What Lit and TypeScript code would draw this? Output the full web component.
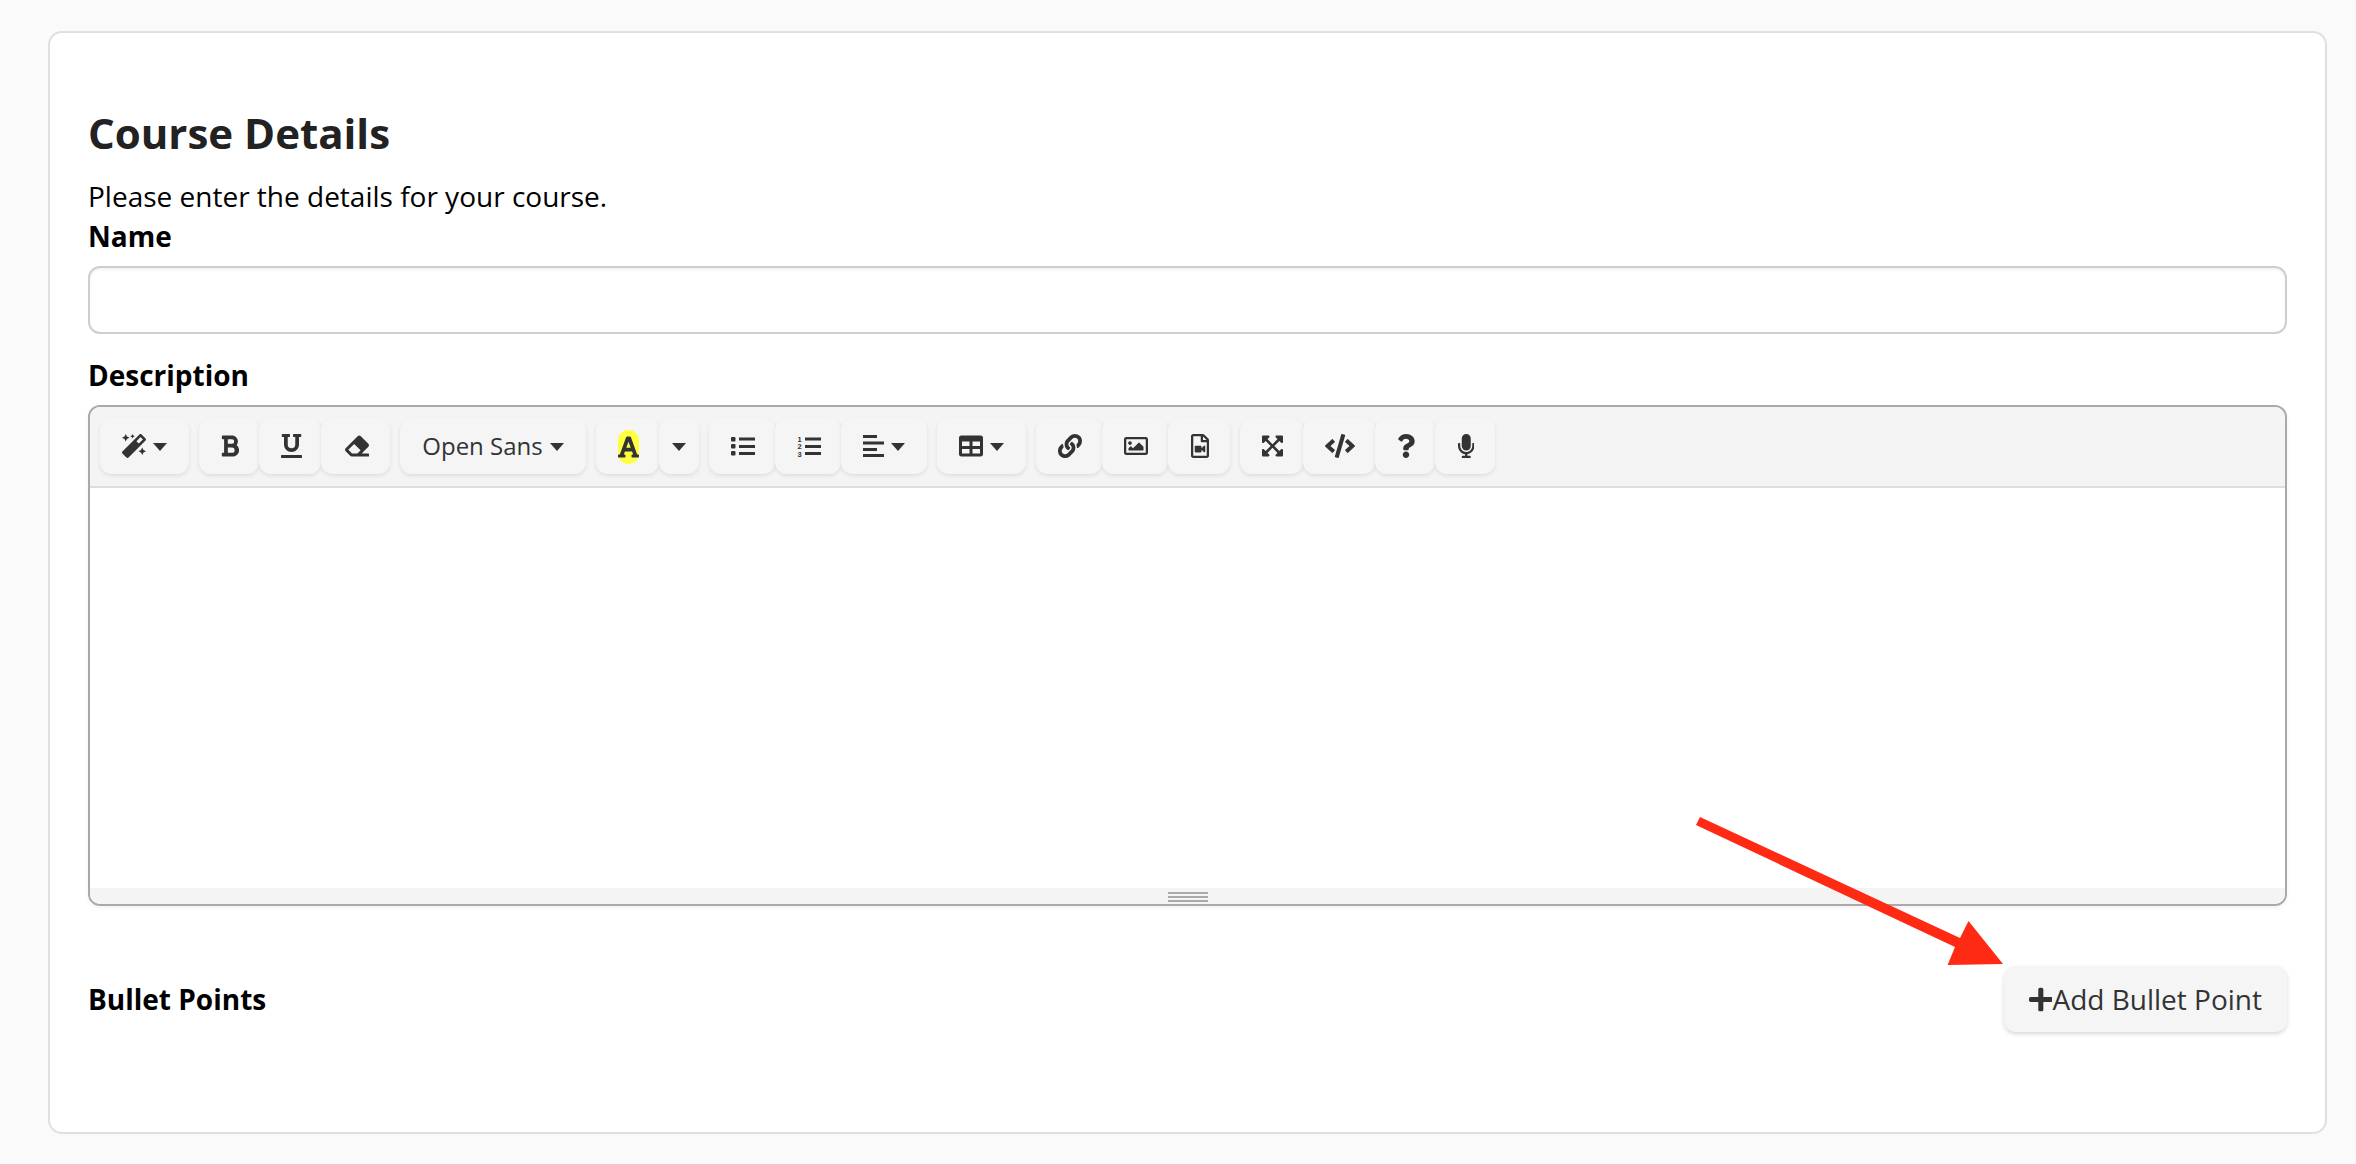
import { LitElement, html, css, svg } from "lit";
import { customElement } from "lit/decorators.js";

const fa = (w: number, d: string, h = 24) =>
  html`<svg class="ic" width=${(w / 512) * h} height=${h} viewBox="0 0 ${w} 512"><path d=${d} fill="currentColor"></path></svg>`;

const caret = html`<svg class="ct" width="14" height="8" viewBox="0 0 14 8"><polygon points="0,0 14,0 7,8" fill="currentColor"></polygon></svg>`;

const P = {
  magic: "M224 96l16-32 32-16-32-16-16-32-16 32-32 16 32 16 16 32zM80 160l26.66-53.33L160 80l-53.34-26.67L80 0 53.34 53.33 0 80l53.34 26.67L80 160zm352 128l-26.66 53.33L352 368l53.34 26.67L432 448l26.66-53.33L512 368l-53.34-26.67L432 288zm70.62-193.77L417.77 9.38C411.53 3.12 403.34 0 395.15 0c-8.19 0-16.38 3.12-22.63 9.38L9.38 372.52c-12.5 12.5-12.5 32.76 0 45.25l84.85 84.85c6.25 6.25 14.44 9.37 22.62 9.37 8.19 0 16.38-3.12 22.63-9.37l363.14-363.15c12.5-12.48 12.5-32.75 0-45.24zM359.45 203.46l-50.91-50.91 86.6-86.6 50.91 50.91-86.6 86.6z",
  bold: "M333.49 238a122 122 0 0 0 27-65.21C367.87 96.49 308 32 233.42 32H34a16 16 0 0 0-16 16v48a16 16 0 0 0 16 16h31.87v288H34a16 16 0 0 0-16 16v48a16 16 0 0 0 16 16h209.32c70.8 0 134.14-51.75 141-122.4 4.74-48.45-16.39-92.06-50.83-119.6zM145.66 112h87.76a48 48 0 0 1 0 96h-87.76zm87.76 288h-87.76V288h87.76a56 56 0 0 1 0 112z",
  underline: "M32 64h32v160c0 88.22 71.78 160 160 160s160-71.78 160-160V64h32a16 16 0 0 0 16-16V16a16 16 0 0 0-16-16H272a16 16 0 0 0-16 16v32a16 16 0 0 0 16 16h32v160a80 80 0 0 1-160 0V64h32a16 16 0 0 0 16-16V16a16 16 0 0 0-16-16H32a16 16 0 0 0-16 16v32a16 16 0 0 0 16 16zm400 384H16a16 16 0 0 0-16 16v32a16 16 0 0 0 16 16h416a16 16 0 0 0 16-16v-32a16 16 0 0 0-16-16z",
  eraser: "M497.941 273.941c18.745-18.745 18.745-49.137 0-67.882l-160-160c-18.745-18.745-49.136-18.746-67.883 0l-256 256c-18.745 18.745-18.745 49.137 0 67.882l96 96A48.004 48.004 0 0 0 144 480h356c6.627 0 12-5.373 12-12v-40c0-6.627-5.373-12-12-12H355.883l142.058-142.059zm-302.627-62.627l137.373 137.373L265.373 416H150.628l-80-80 124.686-124.686z",
  font: "M432 416h-23.41L277.88 53.69A32 32 0 0 0 247.58 32h-47.16a32 32 0 0 0-30.3 21.69L39.41 416H16a16 16 0 0 0-16 16v32a16 16 0 0 0 16 16h128a16 16 0 0 0 16-16v-32a16 16 0 0 0-16-16h-19.58l23.3-64h152.56l23.3 64H304a16 16 0 0 0-16 16v32a16 16 0 0 0 16 16h128a16 16 0 0 0 16-16v-32a16 16 0 0 0-16-16zM176.85 272L224 142.51 271.15 272z",
  table: "M464 32H48C21.49 32 0 53.49 0 80v352c0 26.51 21.49 48 48 48h416c26.51 0 48-21.49 48-48V80c0-26.51-21.49-48-48-48zM224 416H64v-96h160v96zm0-160H64v-96h160v96zm224 160H288v-96h160v96zm0-160H288v-96h160v96z",
  link: "M326.612 185.391c59.747 59.809 58.927 155.698.36 214.59-.11.12-.24.25-.36.37l-67.2 67.2c-59.27 59.27-155.699 59.262-214.96 0-59.27-59.26-59.27-155.7 0-214.96l37.106-37.106c9.84-9.84 26.786-3.3 27.294 10.606.648 17.722 3.826 35.527 9.69 52.721 1.986 5.822.567 12.262-3.783 16.612l-13.087 13.087c-28.026 28.026-28.905 73.66-1.155 101.96 28.024 28.579 74.086 28.749 102.325.51l67.2-67.19c28.191-28.191 28.073-73.757 0-101.83-3.701-3.694-7.429-6.564-10.341-8.569a16.037 16.037 0 0 1-6.947-12.606c-.396-10.567 3.348-21.456 11.698-29.806l21.054-21.055c5.521-5.521 14.182-6.199 20.584-1.731a152.482 152.482 0 0 1 20.522 17.197zM467.547 44.449c-59.261-59.262-155.69-59.27-214.96 0l-67.2 67.2c-.12.12-.25.25-.36.37-58.566 58.892-59.387 154.781.36 214.59a152.454 152.454 0 0 0 20.521 17.196c6.402 4.468 15.064 3.789 20.584-1.731l21.054-21.055c8.35-8.35 12.094-19.239 11.698-29.806a16.037 16.037 0 0 0-6.947-12.606c-2.912-2.005-6.64-4.875-10.341-8.569-28.073-28.073-28.191-73.639 0-101.83l67.2-67.19c28.239-28.239 74.3-28.069 102.325.51 27.75 28.3 26.872 73.934-1.155 101.96l-13.087 13.087c-4.35 4.35-5.769 10.79-3.783 16.612 5.864 17.194 9.042 34.999 9.69 52.721.509 13.906 17.454 20.446 27.294 10.606l37.106-37.106c59.271-59.259 59.271-155.699.001-214.959z",
  image: "M464 64H48C21.49 64 0 85.49 0 112v288c0 26.51 21.49 48 48 48h416c26.51 0 48-21.49 48-48V112c0-26.51-21.49-48-48-48zm-6 336H54a6 6 0 0 1-6-6V118a6 6 0 0 1 6-6h404a6 6 0 0 1 6 6v276a6 6 0 0 1-6 6zM128 152c-22.091 0-40 17.909-40 40s17.909 40 40 40 40-17.909 40-40-17.909-40-40-40zM96 352h320v-80l-87.515-87.515c-4.686-4.686-12.284-4.686-16.971 0L192 304l-39.515-39.515c-4.686-4.686-12.284-4.686-16.971 0L96 304v48z",
  video: "M369.941 97.941l-83.882-83.882A48 48 0 0 0 252.118 0H48C21.49 0 0 21.49 0 48v416c0 26.51 21.49 48 48 48h288c26.51 0 48-21.49 48-48V131.882a48 48 0 0 0-14.059-33.941zM332.118 128H256V51.882L332.118 128zM48 464V48h160v104c0 13.255 10.745 24 24 24h104v288H48zm228.687-211.303L224 305.374V268c0-11.046-8.954-20-20-20H100c-11.046 0-20 8.954-20 20v104c0 11.046 8.954 20 20 20h104c11.046 0 20-8.954 20-20v-37.374l52.687 52.674C286.704 397.318 304 390.28 304 375.986V264.011c0-14.311-17.309-21.319-27.313-11.314z",
  expand: "M448 344v112a23.94 23.94 0 0 1-24 24H312c-21.39 0-32.09-25.9-17-41l36.2-36.2L224 295.6 116.77 402.9 153 439c15.09 15.1 4.39 41-17 41H24a23.94 23.94 0 0 1-24-24V344c0-21.4 25.89-32.1 41-17l36.19 36.2L184.46 256 77.18 148.7 41 185c-15.1 15.1-41 4.4-41-17V56a23.94 23.94 0 0 1 24-24h112c21.39 0 32.09 25.9 17 41l-36.2 36.2L224 216.4l107.23-107.3L295 73c-15.09-15.1-4.39-41 17-41h112a23.94 23.94 0 0 1 24 24v112c0 21.4-25.89 32.1-41 17l-36.19-36.2L263.54 256l107.28 107.3L407 327.1c15.1-15.2 41-4.5 41 16.9z",
  code: "M278.9 511.5l-61-17.7c-6.4-1.8-10-8.5-8.2-14.9L346.2 8.7c1.8-6.4 8.5-10 14.9-8.2l61 17.7c6.4 1.8 10 8.5 8.2 14.9L293.8 503.3c-1.9 6.4-8.5 10.1-14.9 8.2zm-114-112.2l43.5-46.4c4.6-4.9 4.3-12.7-.8-17.2L117 256l90.6-79.7c5.1-4.5 5.5-12.3.8-17.2l-43.5-46.4c-4.5-4.8-12.1-5.1-17-.5L3.8 247.2c-5.1 4.7-5.1 12.8 0 17.5l144.1 135.1c4.9 4.6 12.5 4.4 17-.5zm327.2.6l144.1-135.1c5.1-4.7 5.1-12.8 0-17.5L492.1 112.1c-4.8-4.5-12.4-4.3-17 .5L431.6 159c-4.6 4.9-4.3 12.7.8 17.2L523 256l-90.6 79.7c-5.1 4.5-5.5 12.3-.8 17.2l43.5 46.4c4.5 4.9 12.1 5.1 17 .6z",
  help: "M202.021 0C122.202 0 70.503 32.703 29.914 91.026c-7.363 10.58-5.093 25.086 5.178 32.874l43.138 32.709c10.373 7.865 25.132 6.026 33.253-4.148 25.049-31.381 43.63-49.449 82.757-49.449 30.764 0 68.816 19.799 68.816 49.631 0 22.552-18.617 34.134-48.993 51.164-35.423 19.86-82.299 44.576-82.299 106.405V320c0 13.255 10.745 24 24 24h72.471c13.255 0 24-10.745 24-24v-5.773c0-42.86 125.268-44.645 125.268-160.627C377.504 66.256 286.902 0 202.021 0zM192 373.459c-38.196 0-69.271 31.075-69.271 69.271 0 38.195 31.075 69.27 69.271 69.27s69.271-31.075 69.271-69.271-31.075-69.27-69.271-69.27z",
  mic: "M176 352c53.02 0 96-42.98 96-96V96c0-53.02-42.98-96-96-96S80 42.98 80 96v160c0 53.02 42.98 96 96 96zm160-160h-16c-8.84 0-16 7.16-16 16v48c0 74.8-64.49 134.82-140.79 127.38C96.71 376.89 48 317.11 48 250.3V208c0-8.84-7.16-16-16-16H16c-8.84 0-16 7.16-16 16v40.16c0 89.64 63.97 169.55 152 181.69V464H96c-8.84 0-16 7.16-16 16v16c0 8.84 7.16 16 16 16h160c8.84 0 16-7.16 16-16v-16c0-8.84-7.16-16-16-16h-56v-33.77C285.71 418.47 352 344.9 352 256v-48c0-8.84-7.16-16-16-16z",
  plus: "M416 208H272V64c0-17.67-14.33-32-32-32h-32c-17.67 0-32 14.33-32 32v144H32c-17.67 0-32 14.33-32 32v32c0 17.67 14.33 32 32 32h144v144c0 17.67 14.33 32 32 32h32c17.67 0 32-14.33 32-32V304h144c17.67 0 32-14.33 32-32v-32c0-17.67-14.33-32-32-32z",
};

const ulIcon = html`<svg class="ic" width="24" height="22" viewBox="0 0 24 22" fill="currentColor">
  <rect x="0" y="2" width="4.5" height="4.5" rx="1"></rect><rect x="0" y="9" width="4.5" height="4.5" rx="1"></rect><rect x="0" y="16" width="4.5" height="4.5" rx="1"></rect>
  <rect x="8" y="2.5" width="16" height="3"></rect><rect x="8" y="10" width="16" height="3"></rect><rect x="8" y="17" width="16" height="3"></rect></svg>`;

const olIcon = html`<svg class="ic" width="24" height="26" viewBox="0 -2 24 26" fill="currentColor">
  <text class="num" x="2.5" y="6.5" text-anchor="middle">1</text><text class="num" x="2.5" y="14" text-anchor="middle">2</text><text class="num" x="2.5" y="21.5" text-anchor="middle">3</text>
  <rect x="8" y="2.5" width="16" height="3"></rect><rect x="8" y="10" width="16" height="3"></rect><rect x="8" y="17" width="16" height="3"></rect></svg>`;

const alignIcon = html`<svg class="ic" width="21" height="22" viewBox="0 0 21 22" fill="currentColor">
  <rect y="0" width="14" height="3"></rect><rect y="6.5" width="21" height="3"></rect><rect y="13" width="14" height="3"></rect><rect y="19" width="21" height="3"></rect></svg>`;

type Btn = { w: number; c: unknown };

const groups: Btn[][] = [
  [{ w: 89, c: html`${fa(512, P.magic)}${caret}` }],
  [
    { w: 60, c: fa(384, P.bold) },
    { w: 62, c: fa(448, P.underline) },
    { w: 69, c: fa(512, P.eraser) },
  ],
  [{ w: 186, c: html`<span class="fname">Open Sans</span>${caret}` }],
  [
    { w: 63, c: html`<span class="hl">${fa(448, P.font)}</span>` },
    { w: 40, c: caret },
  ],
  [
    { w: 66, c: ulIcon },
    { w: 66, c: olIcon },
    { w: 86, c: html`${alignIcon}${caret}` },
  ],
  [{ w: 89, c: html`${fa(512, P.table)}${caret}` }],
  [
    { w: 66, c: fa(512, P.link) },
    { w: 66, c: fa(512, P.image) },
    { w: 62, c: fa(384, P.video) },
  ],
  [
    { w: 63, c: fa(448, P.expand) },
    { w: 72, c: fa(640, P.code) },
    { w: 60, c: fa(384, P.help) },
    { w: 60, c: fa(352, P.mic) },
  ],
];

@customElement("app-root")
export class AppRoot extends LitElement {
  static styles = css`
    :host {
      display: block;
      position: relative;
      box-sizing: border-box;
      height: 1164px;
      padding: 31px 29px 30px 48px;
      background: #fafafa;
      font-family: "Open Sans", sans-serif;
      font-size: 28px;
      line-height: 36px;
      color: #000;
    }
    .card {
      box-sizing: border-box;
      height: 1103px;
      background: #fff;
      border: 2px solid #e0e0e0;
      border-radius: 14px;
      padding: 75px 38px 0;
    }
    h3 {
      margin: 0 0 20px;
      font-size: 42px;
      line-height: 50px;
      font-weight: 700;
      color: #222;
    }
    p {
      margin: 0 0 4px;
    }
    label {
      display: block;
      font-weight: 700;
      margin-bottom: 12px;
    }
    .input {
      box-sizing: border-box;
      height: 68px;
      border: 2px solid #cecece;
      border-radius: 12px;
      box-shadow: inset 0 2px 3px rgba(0, 0, 0, 0.05);
      margin-bottom: 23px;
    }
    .editor {
      box-sizing: border-box;
      height: 501px;
      border: 2px solid #a9a9a9;
      border-radius: 12px;
      box-shadow: 0 2px 4px rgba(0, 0, 0, 0.05);
      overflow: hidden;
    }
    .toolbar {
      display: flex;
      gap: 10px;
      box-sizing: border-box;
      height: 81px;
      padding: 11px 10px;
      background: #f4f4f4;
      border-bottom: 2px solid #ddd;
    }
    .group {
      display: flex;
    }
    .btn {
      display: flex;
      align-items: center;
      justify-content: center;
      gap: 7px;
      height: 56px;
      background: #f5f5f5;
      border-radius: 12px;
      box-shadow: 0 2px 4px rgba(0, 0, 0, 0.09);
      color: #333;
      font-size: 24px;
    }
    .ic,
    .ct {
      display: block;
      flex: none;
    }
    .ct {
      margin-top: 2px;
    }
    .btn > .ic:only-child,
    .btn > .hl {
      margin-left: 2px;
    }
    .num {
      font: 700 7.5px "Liberation Sans", sans-serif;
    }
    .hl {
      display: flex;
      align-items: center;
      justify-content: center;
      width: 21px;
      height: 34px;
      margin-top: 2px;
      background: #ffff3f;
      border-radius: 10px;
    }
    .area {
      height: 400px;
      background: #fff;
    }
    .status {
      display: flex;
      flex-direction: column;
      align-items: center;
      gap: 2px;
      box-sizing: border-box;
      height: 16px;
      padding-top: 4px;
      background: #f4f4f4;
    }
    .status i {
      display: block;
      width: 40px;
      height: 2px;
      background: #a9a9a9;
    }
    .row {
      display: flex;
      justify-content: space-between;
      align-items: center;
      margin-top: 60px;
    }
    .row label {
      margin: 0;
    }
    .add {
      display: flex;
      align-items: center;
      box-sizing: border-box;
      height: 66px;
      padding: 0 25px;
      background: #f5f5f5;
      border-radius: 12px;
      box-shadow: 0 2px 4px rgba(0, 0, 0, 0.16);
      color: #333;
    }
    .arrow {
      position: absolute;
      left: 0;
      top: 0;
      pointer-events: none;
    }
  `;

  render() {
    return html`
      <div class="card">
        <h3>Course Details</h3>
        <p>Please enter the details for your course.</p>
        <label>Name</label>
        <div class="input"></div>
        <label>Description</label>
        <div class="editor">
          <div class="toolbar">
            ${groups.map(
              (g) => html`<div class="group">
                ${g.map((b) => html`<div class="btn" style="width:${b.w}px">${b.c}</div>`)}
              </div>`
            )}
          </div>
          <div class="area"></div>
          <div class="status"><i></i><i></i><i></i></div>
        </div>
        <div class="row">
          <label>Bullet Points</label>
          <div class="add">${fa(448, P.plus, 27)}<span>Add Bullet Point</span></div>
        </div>
      </div>
      <svg class="arrow" width="2356" height="1164" viewBox="0 0 2356 1164">
        ${svg`<polygon points="1700,817 1960,938 1968.5,921 2003,964 1947.6,965 1955,947 1696,825" fill="#ff2a14"></polygon>`}
      </svg>
    `;
  }
}
